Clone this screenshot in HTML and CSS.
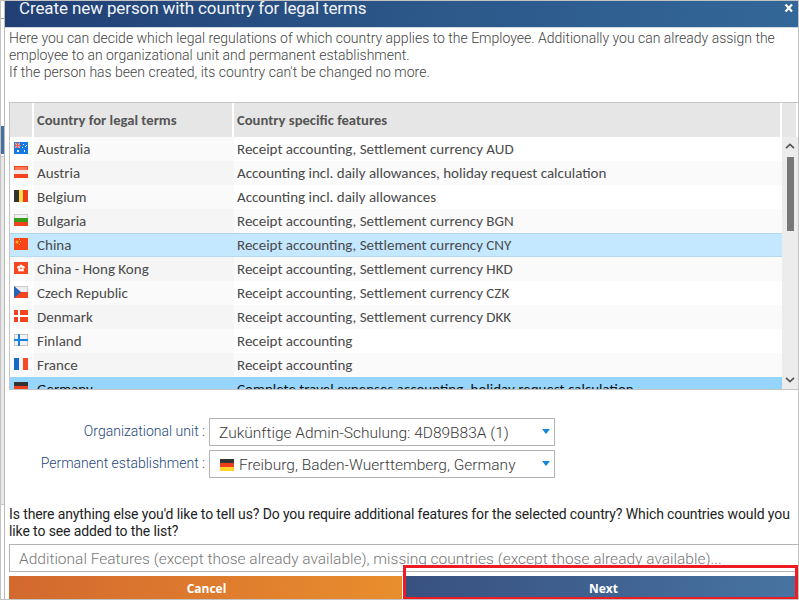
FILE: index.html
```html
<!DOCTYPE html>
<html lang="en">
<head>
<meta charset="utf-8">
<title>Create new person</title>
<link rel="stylesheet" href="styles.css">
</head>
<body>
<div class="frame">
  <aside class="backdrop"><i class="edge"></i><i class="active"></i><i class="panel"></i></aside>
  <main class="dialog">
    <header class="title"><h1>Create new person with country for legal terms</h1>
      <svg class="close" viewBox="0 0 10 10"><path d="M1.5 1.5L8 8.5M8 1.5L1.5 8.5"/></svg></header>
    <div class="content">
      <div class="intro"><p>Here you can decide which legal regulations of which country applies to the Employee. Additionally you can already assign the</p><p>employee to an organizational unit and permanent establishment.</p><p>If the person has been created, its country can't be changed no more.</p></div>
      <section class="table">
        <div class="thead"><span></span><span><b>Country for legal terms</b></span><span><b>Country specific features</b></span><span></span></div>
        <div class="tbody">
          <div class="rows">
            <div class="row"><span><svg class="flag" viewBox="0 0 14 12"><path fill="#1479e2" d="M0 0h14v12H0z"/><path fill="#8294ce" d="M1 1h5v5H1z"/><path stroke="#f4b0a4" stroke-width="1" d="M1 1l5 5M6 1L1 6"/><path stroke="#ef5f45" stroke-width="1.2" d="M3.5 0v6M0 3.5h7"/><path fill="#e8f5ff" d="M3 8h2v2H3zM9 2h1v1H9zM11 4h1v1h-1zM8 5h1v1H8zM10 8h1v2h-1zM12 3h1v1h-1z"/></svg></span><span>Australia</span><span>Receipt accounting, Settlement currency AUD</span></div>
            <div class="row"><span><svg class="flag" viewBox="0 0 14 12"><path fill="#f4431c" d="M0 0h14v12H0z"/><path fill="#fa7a58" d="M1 1h12v3H1z"/><path fill="#eee9e7" d="M0 4h14v4H0z"/></svg></span><span>Austria</span><span>Accounting incl. daily allowances, holiday request calculation</span></div>
            <div class="row"><span><svg class="flag" viewBox="0 0 14 12"><path fill="#333" d="M0 0h5v12H0z"/><path fill="#ffd94a" d="M5 0h4v12H5z"/><path fill="#ed3d1d" d="M9 0h5v12H9z"/></svg></span><span>Belgium</span><span>Accounting incl. daily allowances</span></div>
            <div class="row"><span><svg class="flag" viewBox="0 0 14 12"><path fill="#ccc" d="M0 0h14v4H0z"/><path fill="#f0f0f0" d="M1 1h12v3H1z"/><path fill="#359b18" d="M0 4h14v4H0z"/><path fill="#ef421d" d="M0 8h14v4H0z"/></svg></span><span>Bulgaria</span><span>Receipt accounting, Settlement currency BGN</span></div>
            <div class="row hover"><span><svg class="flag" viewBox="0 0 14 12"><path fill="#fb4318" d="M0 0h14v12H0z"/><path fill="#ffc322" d="M3 2l.6 1.3 1.4.1-1 1 .3 1.6L3 5.1 1.7 6 2 4.4l-1-1 1.4-.1zM5 1h1v1H5zM6 3h1v1H6zM5 6h1v1H5z"/></svg></span><span>China</span><span>Receipt accounting, Settlement currency CNY</span></div>
            <div class="row"><span><svg class="flag" viewBox="0 0 14 12"><path fill="#f64720" d="M0 0h14v12H0z"/><g fill="#fff"><circle cx="7" cy="4" r="1.5"/><circle cx="9.2" cy="5.3" r="1.5"/><circle cx="8.4" cy="8" r="1.5"/><circle cx="5.6" cy="8" r="1.5"/><circle cx="4.7" cy="5.3" r="1.5"/></g><circle cx="7" cy="6.2" r=".8" fill="#f8a080"/></svg></span><span>China - Hong Kong</span><span>Receipt accounting, Settlement currency HKD</span></div>
            <div class="row"><span><svg class="flag" viewBox="0 0 14 12"><path fill="#ccc" d="M0 0h14v6H0z"/><path fill="#eee" d="M0 1h13v5H0z"/><path fill="#f2441f" d="M0 6h14v6H0z"/><path fill="#2463b8" d="M0 0l7 6-7 6z"/></svg></span><span>Czech Republic</span><span>Receipt accounting, Settlement currency CZK</span></div>
            <div class="row"><span><svg class="flag" viewBox="0 0 14 12"><path fill="#f4431e" d="M0 0h14v12H0z"/><path fill="#fff" d="M4 0h2v12H4zM0 5h14v2H0z"/></svg></span><span>Denmark</span><span>Receipt accounting, Settlement currency DKK</span></div>
            <div class="row"><span><svg class="flag" viewBox="0 0 14 12"><path fill="#c4c4c4" d="M0 0h14v12H0z"/><path fill="#f2f2f2" d="M1 1h12v10H1z"/><path fill="#1681df" d="M4 0h2v12H4zM0 5h14v2H0z"/></svg></span><span>Finland</span><span>Receipt accounting</span></div>
            <div class="row"><span><svg class="flag" viewBox="0 0 14 12"><path fill="#1769c9" d="M0 0h5v12H0z"/><path fill="#f4f4f4" d="M5 0h4v12H5z"/><path fill="#f24b25" d="M9 0h5v12H9z"/></svg></span><span>France</span><span>Receipt accounting</span></div>
            <div class="row selected"><span><svg class="flag" viewBox="0 0 14 12"><path fill="#333" d="M0 0h14v4H0z"/><path fill="#ed3f1b" d="M0 4h14v4H0z"/><path fill="#ffd42a" d="M0 8h14v4H0z"/></svg></span><span>Germany</span><span>Complete travel expenses accounting, holiday request calculation</span></div>
          </div>
          <div class="scroll"><svg viewBox="0 0 10 6"><path d="M1 5.2L5 1.5 9 5.2"/></svg><i class="thumb"></i><svg viewBox="0 0 10 6"><path d="M1 .8L5 4.5 9 .8"/></svg></div>
        </div>
      </section>
      <section class="form">
        <label>Organizational unit :</label><div class="select"><span>Zukünftige Admin-Schulung: 4D89B83A (1)</span><i class="caret"></i></div>
        <label>Permanent establishment :</label><div class="select"><svg class="flag" viewBox="0 0 14 12"><path fill="#333" d="M0 0h14v4H0z"/><path fill="#ed3f1b" d="M0 4h14v4H0z"/><path fill="#ffd42a" d="M0 8h14v4H0z"/></svg><span>Freiburg, Baden-Wuerttemberg, Germany</span><i class="caret"></i></div>
      </section>
      <div class="question"><p>Is there anything else you'd like to tell us? Do you require additional features for the selected country? Which countries would you</p><p>like to see added to the list?</p></div>
      <div class="input"><span>Additional Features (except those already available), missing countries (except those already available)...</span></div>
      <footer class="actions"><div class="btn cancel">Cancel</div><div class="btn next">Next</div></footer>
    </div>
  </main>
  <div class="highlight"></div>
</div>
</body>
</html>
```

FILE: styles.css
```css
* { box-sizing: border-box; }
body, h1, p { margin: 0; }
body { font-family: Roboto, sans-serif; background: #fff; }
.frame { position: relative; width: 799px; height: 600px; border: 1px solid #c3c3c3; display: flex; overflow: hidden; }
.backdrop { width: 3px; display: flex; flex-direction: column; flex: none; }
.edge { height: 18px; border-bottom: 1px solid #999; }
.active { margin-top: 107px; height: 28px; background: #456f9e; }
.panel { margin-top: 2px; height: 349px; background: #e8e8e8; border: solid #c8c8c8; border-width: 1px 0; }
.dialog { flex: 1; min-width: 0; border-left: 1px solid #bbb; }
.title { height: 27px; display: flex; justify-content: space-between; background: linear-gradient(100deg, #213f75, #2b5688 50%, #346799); border-bottom: 1px solid #d0d8e2; }
.title h1 { margin-left: 14px; font-size: 17px; line-height: 15px; font-weight: 400; color: #f2f5f9; white-space: nowrap; letter-spacing: -.11px; }
.close { width: 10px; height: 10px; margin: 2px 4px 0 0; fill: none; stroke: #fff; stroke-width: 2.2; }
.content { padding-left: 4px; }
.intro { margin-top: 2px; height: 72px; font-size: 14px; font-weight: 300; line-height: 17px; color: #444; white-space: nowrap; }
.table { height: 288px; border: solid #c5c5c5; border-width: 1px 0 1px 1px; font-family: Carlito, "Open Sans", sans-serif; }
.thead { display: grid; grid-template-columns: 22px 198px 546px 14px; grid-template-rows: 34px; gap: 2px; height: 34px; }
.thead span { background: #e6e6e6; padding-left: 3px; line-height: 34px; font-size: 14.65px; color: #555; white-space: nowrap; }
.thead b { font-weight: 600; }
.tbody { display: flex; height: 252px; }
.rows { width: 772px; height: 252px; overflow: hidden; }
.row { display: grid; grid-template-columns: 24px 200px 548px; grid-template-rows: 24px; height: 24px; font-size: 15px; line-height: 25px; color: #4a4a4a; white-space: nowrap; }
.row span { padding-left: 3px; }
.row > :first-child { padding: 5px 0 0 4px; line-height: 0; }
.row > :nth-child(2) { background: #fafafa; }
.row:nth-child(even) { background: #fafafa; }
.row:nth-child(even) > :nth-child(2) { background: #f5f5f5; }
.row.hover, .row.hover > :nth-child(n) { background: #c4e8ff; }
.row.hover > :nth-child(n) { border-top: 1px solid #acd7ec; border-bottom: 1px solid #b5dbed; line-height: 23px; }
.row.hover > :first-child { padding-top: 4px; line-height: 0; }
.row.selected, .row.selected > :nth-child(n) { background: #95d5ff; color: #111; }
.flag { width: 14px; height: 12px; flex: none; }
.scroll { flex: 1; display: flex; flex-direction: column; align-items: center; background: #ececec; }
.scroll svg { width: 10px; height: 6px; fill: none; stroke: #555; stroke-width: 1.7; margin-top: 6px; }
.scroll svg:last-child { margin: auto 0 6px; }
.thumb { width: 7px; height: 74px; margin-top: 8px; background: #777; }
.form { margin-top: 28px; display: grid; grid-template-columns: 196px 346px; column-gap: 4px; row-gap: 4px; }
.form label { text-align: right; color: #1e477a; font-size: 14px; font-weight: 300; line-height: 27px; white-space: nowrap; }
.select { height: 28px; border: 1px solid #b3b3b3; display: flex; align-items: center; padding: 1px 4px 0 9px; font-size: 15.5px; font-weight: 300; color: #3a3a3a; white-space: nowrap; }
.select .flag { margin: 0 5px 0 1px; }
.caret { margin: -2px 0 0 auto; border: solid transparent; border-width: 5px 4px 0; border-top-color: #1587d5; }
.question { margin-top: 28px; height: 38px; font-size: 14px; line-height: 17px; letter-spacing: -.115px; color: #222; white-space: nowrap; }
.input { height: 28px; border: 1px solid #b3b3b3; border-right: 0; padding-left: 9px; font-size: 15.5px; line-height: 28px; font-weight: 300; color: #777; white-space: nowrap; }
.actions { margin-top: 4px; display: grid; grid-template-columns: 393px 392px; column-gap: 2px; }
.btn { height: 24px; padding-left: 2px; text-align: center; color: #fff; font: 700 12px/25px "Open Sans", sans-serif; }
.cancel { background: linear-gradient(100deg, #d2682e, #e98e2d); }
.next { background: linear-gradient(100deg, #38507f, #4774a2); padding-left: 7px; }
.highlight { position: absolute; left: 402px; top: 564px; width: 395px; height: 34px; border: 3px solid #ed1c24; border-bottom-width: 2px; }
```
